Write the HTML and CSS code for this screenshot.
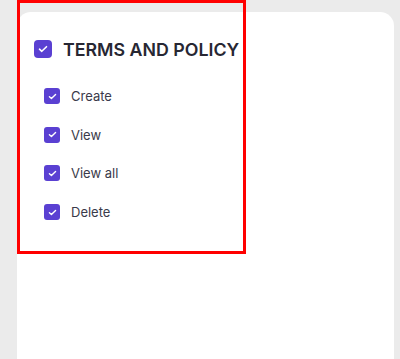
FILE: index.html
```html
<!DOCTYPE html>
<html lang="en">
<head>
    <meta charset="UTF-8">
    <meta name="viewport" content="width=device-width, initial-scale=1.0">
    <title>Permissions</title>
    <link rel="stylesheet" href="styles.css">
</head>
<body>
    <div class="perm-card">
        <div class="perm-group">
            <label class="perm-head">
                <span class="check check-lg">
                    <svg width="10" height="8" viewBox="0 0 10 8" fill="none" stroke="#fff" stroke-width="1.6" stroke-linecap="round" stroke-linejoin="round">
                        <polyline points="1.5 4.2 3.8 6.3 8.5 1.7"/>
                    </svg>
                </span>
                <span class="perm-title">TERMS AND POLICY</span>
            </label>
            <ul class="perm-list">
                <li class="perm-item">
                    <span class="check">
                        <svg width="9" height="7" viewBox="0 0 10 8" fill="none" stroke="#fff" stroke-width="1.6" stroke-linecap="round" stroke-linejoin="round">
                            <polyline points="1.5 4.2 3.8 6.3 8.5 1.7"/>
                        </svg>
                    </span>
                    Create
                </li>
                <li class="perm-item">
                    <span class="check">
                        <svg width="9" height="7" viewBox="0 0 10 8" fill="none" stroke="#fff" stroke-width="1.6" stroke-linecap="round" stroke-linejoin="round">
                            <polyline points="1.5 4.2 3.8 6.3 8.5 1.7"/>
                        </svg>
                    </span>
                    View
                </li>
                <li class="perm-item">
                    <span class="check">
                        <svg width="9" height="7" viewBox="0 0 10 8" fill="none" stroke="#fff" stroke-width="1.6" stroke-linecap="round" stroke-linejoin="round">
                            <polyline points="1.5 4.2 3.8 6.3 8.5 1.7"/>
                        </svg>
                    </span>
                    View all
                </li>
                <li class="perm-item">
                    <span class="check">
                        <svg width="9" height="7" viewBox="0 0 10 8" fill="none" stroke="#fff" stroke-width="1.6" stroke-linecap="round" stroke-linejoin="round">
                            <polyline points="1.5 4.2 3.8 6.3 8.5 1.7"/>
                        </svg>
                    </span>
                    Delete
                </li>
            </ul>
        </div>
    </div>
    <div class="highlight"></div>
</body>
</html>
```

FILE: styles.css
```css
:root {
    --check-color: #5a40d2;
    --page-bg: #ebebeb;
    --title-color: #272733;
    --text-color: #3a3a4a;
}

body {
    margin: 0;
    padding: 12px 6px 0 17px;
    background: var(--page-bg);
    font-family: Inter, 'Noto Sans', sans-serif;
    overflow: hidden;
}

.perm-card {
    background: #ffffff;
    border-radius: 14px 14px 0 0;
    height: 360px;
    padding: 26px 17px 0;
    box-sizing: border-box;
}

.perm-head {
    display: flex;
    align-items: center;
    gap: 11px;
    height: 22px;
}

.perm-title {
    font-size: 17.8px;
    font-weight: 600;
    color: var(--title-color);
}

.check {
    width: 16px;
    height: 16px;
    border-radius: 3px;
    background: var(--check-color);
    display: inline-flex;
    align-items: center;
    justify-content: center;
    flex-shrink: 0;
}

.check-lg {
    width: 18px;
    height: 18px;
    border-radius: 4px;
}

.perm-list {
    list-style: none;
    margin: 26px 0 0;
    padding: 0 0 0 10px;
    display: flex;
    flex-direction: column;
    gap: 18.7px;
}

.perm-item {
    display: flex;
    align-items: center;
    gap: 11px;
    height: 20px;
    font-size: 13px;
    color: var(--text-color);
}

.highlight {
    position: absolute;
    left: 17px;
    top: 0;
    width: 229px;
    height: 254px;
    border: 3px solid #ff0000;
    box-sizing: border-box;
}
```
